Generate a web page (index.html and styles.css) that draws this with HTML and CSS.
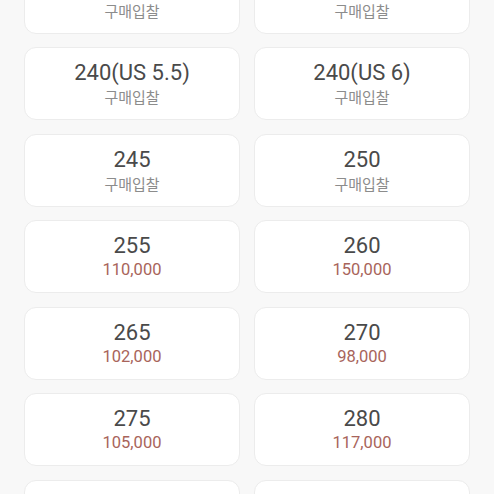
FILE: index.html
```html
<!DOCTYPE html>
<html lang="ko">
<head>
  <meta charset="UTF-8" />
  <meta name="viewport" content="width=device-width, initial-scale=1.0" />
  <title>사이즈 선택</title>
  <link rel="stylesheet" href="styles.css">
</head>
<body>
  <div class="size-list">
    <div class="size-card"><span class="size">235(US 5)</span><span class="bid">구매입찰</span></div>
    <div class="size-card"><span class="size">235(US 5.5)</span><span class="bid">구매입찰</span></div>
    <div class="size-card"><span class="size">240(US 5.5)</span><span class="bid">구매입찰</span></div>
    <div class="size-card"><span class="size">240(US 6)</span><span class="bid">구매입찰</span></div>
    <div class="size-card"><span class="size">245</span><span class="bid">구매입찰</span></div>
    <div class="size-card"><span class="size">250</span><span class="bid">구매입찰</span></div>
    <div class="size-card"><span class="size">255</span><span class="price">110,000</span></div>
    <div class="size-card"><span class="size">260</span><span class="price">150,000</span></div>
    <div class="size-card"><span class="size">265</span><span class="price">102,000</span></div>
    <div class="size-card"><span class="size">270</span><span class="price">98,000</span></div>
    <div class="size-card"><span class="size">275</span><span class="price">105,000</span></div>
    <div class="size-card"><span class="size">280</span><span class="price">117,000</span></div>
    <div class="size-card"><span class="size">285</span><span class="bid">구매입찰</span></div>
    <div class="size-card"><span class="size">290</span><span class="bid">구매입찰</span></div>
  </div>
</body>
</html>
```

FILE: styles.css
```css
body {
  margin: 0;
  background: #f8f8f8;
  font-family: Roboto, "Noto Sans CJK KR", sans-serif;
  overflow: hidden;
  height: 494px;
}

.size-list {
  display: grid;
  grid-template-columns: 216px 216px;
  grid-auto-rows: 73px;
  column-gap: 14px;
  row-gap: 13.5px;
  padding: 0 24px;
  margin-top: -39.5px;
}

.size-card {
  background: #ffffff;
  border: 1px solid #ececec;
  border-radius: 12px;
  box-sizing: border-box;
  padding-top: 2px;
  display: flex;
  flex-direction: column;
  align-items: center;
  justify-content: center;
}

.size {
  font-size: 22px;
  line-height: 24px;
  color: #4a4a4a;
}

.bid {
  font-family: "Noto Sans CJK KR", sans-serif;
  font-size: 15px;
  line-height: 23px;
  color: #8c8c8c;
}

.price {
  font-size: 16.5px;
  line-height: 23px;
  color: #a8645b;
}
```
